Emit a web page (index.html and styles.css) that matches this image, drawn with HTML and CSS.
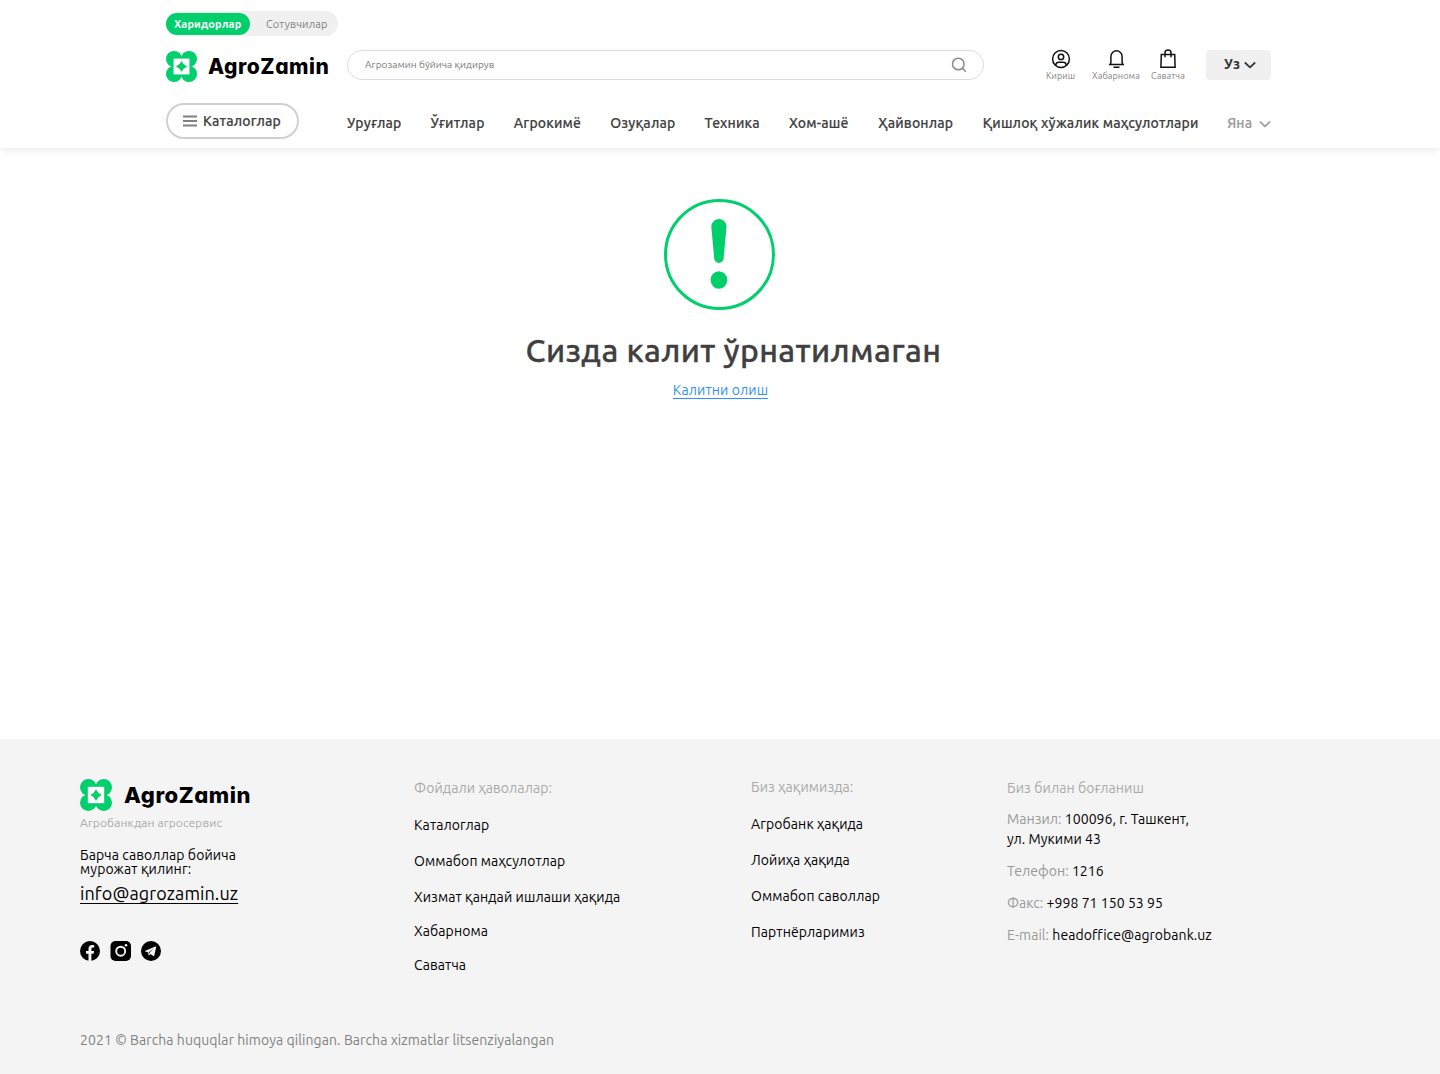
FILE: index.html
```html
<!DOCTYPE html>
<html lang="uz">
<head>
<meta charset="utf-8">
<title>AgroZamin</title>
<link rel="stylesheet" href="styles.css">
</head>
<body>
<svg width="0" height="0" class="defs" aria-hidden="true">
  <symbol id="mark" viewBox="0 0 32 32">
    <g fill="#00cf6b"><circle cx="8.300" cy="8.300" r="8.300"/><circle cx="23.700" cy="8.300" r="8.300"/><circle cx="8.300" cy="23.700" r="8.300"/><circle cx="23.700" cy="23.700" r="8.300"/></g>
    <path fill="#fff" d="M7.800 7.800h16.400v16.400H7.800z"/>
    <path fill="#00cf6b" d="M16 10.300Q17.700 14.300 21.700 16Q17.700 17.700 16 21.700Q14.300 17.700 10.300 16Q14.300 14.300 16 10.300z"/>
  </symbol>
</svg>
<header class="header">
  <div class="switch">
    <a class="switch-item switch-active">Харидорлар</a>
    <a class="switch-item">Сотувчилар</a>
  </div>
  <div class="main-row">
    <a class="logo">
      <svg class="logo-mark"><use href="#mark"/></svg>
      <span class="wordmark">AgroZamin</span>
    </a>
    <div class="search">
      <span>Агрозамин бўйича қидирув</span>
      <svg width="16" height="16" viewBox="0 0 16 16" fill="none" stroke="#8b8b8b" stroke-width="1.500"><circle cx="7.300" cy="7" r="5.800"/><path d="M11.400 11.200l3.400 3.400"/></svg>
    </div>
    <div class="actions">
      <a class="action">
        <svg width="20" height="20" viewBox="0 0 20 20" fill="none" stroke="#111" stroke-width="1.500"><circle cx="10" cy="10" r="8.400"/><circle cx="10" cy="7.900" r="2.700"/><path d="M4.800 16.400v-.5a3 3 0 0 1 3-2.700h4.400a3 3 0 0 1 3 2.700v.5"/></svg>
        <span>Кириш</span>
      </a>
      <a class="action">
        <svg width="20" height="20" viewBox="0 0 20 20" fill="none" stroke="#111" stroke-width="1.500"><path d="M3 15.500h15M4.300 15.500l.6-2V7.400a5.600 5.600 0 0 1 11.200 0v6.100l.6 2M7.500 18.300h6"/></svg>
        <span>Хабарнома</span>
      </a>
      <a class="action">
        <svg width="20" height="20" viewBox="0 0 20 20" fill="none" stroke="#111" stroke-width="1.500"><path d="M3.300 5.500h13.400l.4 12.700H2.900zM7 8.200V4a3 3 0 0 1 6 0v4.200"/></svg>
        <span>Саватча</span>
      </a>
    </div>
    <button class="lang"><span>Уз</span><svg width="12" height="8" viewBox="0 0 12 8" fill="none" stroke="#333" stroke-width="1.800"><path d="M.8 1.500L6 6.300l5.200-4.800"/></svg></button>
  </div>
  <div class="nav-row">
    <button class="catalog"><svg width="14" height="12" viewBox="0 0 14 12" stroke="#808080" stroke-width="1.800"><path d="M0 1.500h14M0 6h14M0 10.500h14"/></svg><span>Каталоглар</span></button>
    <nav class="nav">
      <a>Уруғлар</a>
      <a>Ўғитлар</a>
      <a>Агрокимё</a>
      <a>Озуқалар</a>
      <a>Техника</a>
      <a>Хом-ашё</a>
      <a>Ҳайвонлар</a>
      <a>Қишлоқ хўжалик маҳсулотлари</a>
      <a class="more">Яна</a>
    </nav>
    <svg class="more-arrow" width="12" height="8" viewBox="0 0 12 8" fill="none" stroke="#999" stroke-width="1.700"><path d="M.8 1.500L6 6.300l5.200-4.800"/></svg>
  </div>
</header>
<main class="notice">
  <svg class="alert" width="111" height="111" viewBox="0 0 111 111"><circle cx="55.500" cy="55.500" r="54" fill="none" stroke="#00cf6b" stroke-width="3"/><path fill="#00cf6b" d="M47.300 27.700a7.600 7.600 0 0 1 15.200 0L59.600 59.300a4.700 4.700 0 0 1-9.400 0z"/><ellipse cx="54.900" cy="81" rx="8.300" ry="8.800" fill="#00cf6b"/></svg>
  <h1 class="title">Сизда калит ўрнатилмаган</h1>
  <a class="get-key">Калитни олиш</a>
</main>
<footer class="footer">
  <div class="columns">
    <section class="about">
      <a class="logo">
        <svg class="logo-mark"><use href="#mark"/></svg>
        <span class="wordmark">AgroZamin</span>
      </a>
      <p class="tagline">Агробанкдан агросервис</p>
      <p class="ask">Барча саволлар бойича<br>мурожат қилинг:</p>
      <a class="mail">info@agrozamin.uz</a>
      <div class="social">
        <svg width="20" height="20" viewBox="0 0 20 20"><circle cx="10" cy="10" r="10"/><path fill="#f4f4f4" d="M8.500 20v-7.200H6V10h2.500V7.800c0-2.500 1.500-3.800 3.700-3.800.9 0 1.800.1 2 .2v2.400h-1.200c-1.200 0-1.600.7-1.600 1.500V10h2.700l-.5 2.800h-2.200V20z"/></svg>
        <svg width="21" height="20" viewBox="0 0 21 20"><rect x=".5" width="20.500" height="20" rx="5"/><circle cx="10.700" cy="10.200" r="4.500" fill="none" stroke="#f4f4f4" stroke-width="1.900"/><circle cx="16" cy="4.300" r="1.300" fill="#f4f4f4"/></svg>
        <svg width="20" height="20" viewBox="0 0 20 20"><circle cx="10" cy="10" r="10"/><path fill="#f4f4f4" d="M3.800 9.900l10.500-4.300c.6-.2 1 .1.800.9l-1.800 8c-.1.600-.5.700-1 .5l-2.800-2-1.400 1.300c-.3.300-.6.200-.6-.2l-.2-2.600-2.700-.9c-.8-.2-.8-.5-.8-.7zm4 1.300l.3 1.900.5-1.600 4.100-4.100z"/></svg>
      </div>
    </section>
    <section class="links">
      <h2>Фойдали ҳаволалар:</h2>
      <a>Каталоглар</a>
      <a>Оммабоп маҳсулотлар</a>
      <a>Хизмат қандай ишлаши ҳақида</a>
      <a class="tight">Хабарнома</a>
      <a class="tight">Саватча</a>
    </section>
    <section class="links company">
      <h2>Биз ҳақимизда:</h2>
      <a>Агробанк ҳақида</a>
      <a>Лойиҳа ҳақида</a>
      <a>Оммабоп саволлар</a>
      <a>Партнёрларимиз</a>
    </section>
    <section class="contacts">
      <h2>Биз билан боғланиш</h2>
      <p><b>Манзил:</b> 100096, г. Ташкент,<br>ул. Мукими 43</p>
      <p><b>Телефон:</b> 1216</p>
      <p><b>Факс:</b> +998 71 150 53 95</p>
      <p><b>E-mail:</b> headoffice@agrobank.uz</p>
    </section>
  </div>
  <p class="copyright">2021 © Barcha huquqlar himoya qilingan. Barcha xizmatlar litsenziyalangan</p>
</footer>
</body>
</html>
```
FILE: styles.css
```css
* { box-sizing: border-box; }
body {
  margin: 0;
  width: 1440px;
  height: 1074px;
  display: flex;
  flex-direction: column;
  background: #fff;
  color: #000;
  font-family: Ubuntu, "Noto Sans", sans-serif;
  font-size: 14px;
  letter-spacing: .1px;
}
h1, h2, p { margin: 0; font-weight: 400; }
a, button { color: inherit; white-space: nowrap; }
button { border: 0; padding: 0; font: inherit; letter-spacing: inherit; }
svg { flex: none; display: block; }
.defs { position: absolute; }

.header {
  height: 148px;
  padding: 11px 169px 0 166px;
  box-shadow: 0 2px 8px rgba(0, 0, 0, .09);
}
.switch {
  display: flex;
  align-items: center;
  width: 172px;
  height: 25px;
  border-radius: 13px;
  background: #f0f0f0;
  color: #828282;
  font-size: 11px;
}
.switch-item { height: 22px; line-height: 22px; padding: 0 8px; }
.switch-item + .switch-item { padding: 0 0 0 16px; }
.switch-active { width: 84px; border-radius: 11px; background: #00cf6b; color: #fff; font-weight: 700; }

.logo { display: flex; align-items: center; gap: 11px; }
.logo-mark { width: 31px; height: 31px; }
.wordmark { font: 800 21px/30px Inter, sans-serif; font-feature-settings: "cv11"; letter-spacing: .55px; color: #000; }
.header .wordmark { margin-top: 1px; }

.main-row { display: flex; height: 30px; margin-top: 14px; }
.main-row .logo { width: 181px; height: 32px; }
.search {
  display: flex;
  align-items: center;
  justify-content: space-between;
  width: 637px;
  padding: 0 16px 0 17px;
  border: 1px solid #dcdce2;
  border-radius: 15px;
  color: #777;
  font-size: 10px;
  letter-spacing: .06px;
}
.search span { margin-top: -1px; }
.actions { display: grid; grid-template-columns: 55px 56px 48px; margin: -1px 14px 0 49px; }
.action { display: flex; flex-direction: column; align-items: center; font-size: 9px; line-height: 14px; color: #828282; }
.lang { display: flex; align-items: center; gap: 4px; width: 65px; padding-left: 18px; border-radius: 4px; background: #f0f0f0; color: #333; font-size: 14px; font-weight: 700; }
.lang span { margin-top: -2px; }

.nav-row { display: flex; margin-top: 23px; height: 36px; color: #404040; font-weight: 500; letter-spacing: .16px; -webkit-text-stroke: .15px; }
.catalog { display: flex; flex: none; align-items: center; gap: 6px; width: 133px; height: 36px; padding-left: 15px; border: 2px solid #d0d0d0; border-radius: 18px; background: #fff; }
.nav { display: grid; grid-template-columns: 54px 54px 67px 65px 55px 60px 75px 215px 25px; column-gap: 29.400px; margin-left: 48px; line-height: 40px; }
.more { color: #999; }
.more-arrow { margin: 17px 0 0 7px; }

.notice { flex: 1; display: flex; flex-direction: column; align-items: center; padding-top: 51px; }
.alert { margin-right: 1px; }
.title { margin: 15px 0 0 27px; color: #404040; font-size: 32px; font-weight: 500; line-height: 50px; letter-spacing: .36px; white-space: nowrap; -webkit-text-stroke: .3px; }
.get-key { margin: 5px 0 0 1px; color: #2f91f5; line-height: 20px; text-decoration: underline; text-underline-offset: 3px; }

.footer { height: 335px; padding: 40px 80px 0; background: #f4f4f4; }
.columns { display: grid; grid-template-columns: 334px 337px 256px 1fr; height: 250px; }
.about .logo { height: 32px; gap: 12px; }
.about .logo-mark { width: 32px; height: 32px; }
.about .wordmark { font-size: 22px; line-height: 32px; }
.tagline { margin-top: 4px; color: #aaa; font-size: 12px; line-height: 16px; }
.ask { margin-top: 17px; line-height: 14px; }
.mail { display: block; margin-top: 5px; font-size: 18px; line-height: 24px; text-decoration: underline; text-underline-offset: 3px; }
.social { display: flex; gap: 10px; margin-top: 36px; }
.links { display: flex; flex-direction: column; }
.links h2, .contacts h2 { color: #aaa; font-size: 14px; line-height: 19px; }
.links a { line-height: 20px; margin-top: 16px; }
.links h2 { margin-bottom: 1px; }
.links .tight { margin-top: 14px; }
.company { margin-top: -1px; }
.contacts p { line-height: 20px; margin-top: 12px; white-space: nowrap; letter-spacing: .05px; }
.contacts h2 { margin-bottom: -1px; }
.contacts b { font-weight: 400; color: #999; }
.copyright { margin-top: 1px; color: #828282; line-height: 20px; letter-spacing: .075px; }
```
